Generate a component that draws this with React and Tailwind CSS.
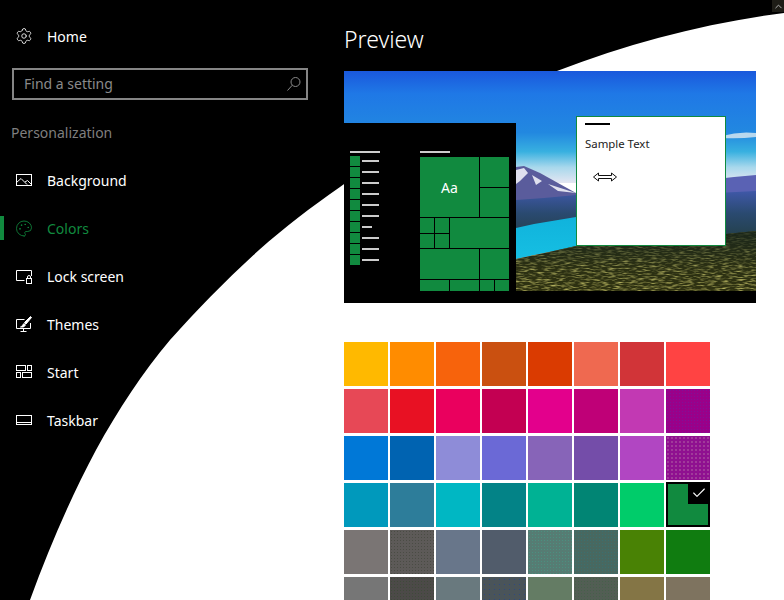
import React from 'react';
import { Settings, Palette, Check, ChevronUp } from 'lucide-react';

const SearchIcon = () => (
  <svg width="14" height="14" viewBox="0 0 14 14" fill="none" stroke="currentColor" strokeWidth="1">
    <circle cx="8.5" cy="5" r="4.5" />
    <path d="M5.3 8.2 L0.5 13.5" />
  </svg>
);

const ImageIcon = () => (
  <svg width="16" height="16" viewBox="0 0 16 16" fill="none" stroke="currentColor" strokeWidth="1">
    <rect x="0.5" y="2.5" width="15" height="11" />
    <path d="M0.5 10.5 L5 6.5 L11 12.5 M9 10 L11.5 8.5 L15.5 12.5" />
  </svg>
);

const LockIcon = () => (
  <svg width="16" height="16" viewBox="0 0 16 16" fill="none" stroke="currentColor" strokeWidth="1">
    <path d="M8.5 12.5 H0.5 V2.5 H15.5 V8" />
    <rect x="10.5" y="10.5" width="5" height="5" />
    <path d="M11.5 10.5 V9 A1.5 1.5 0 0 1 14.5 9 V10.5" />
  </svg>
);

const ThemesIcon = () => (
  <svg width="16" height="16" viewBox="0 0 16 16" fill="none" stroke="currentColor" strokeWidth="1">
    <path d="M8.5 3.5 H0.5 V12.5 H14.5 V7" />
    <path d="M4.5 15.5 H10.5 M7.5 12.5 V15.5" />
    <path d="M14.5 0.5 L15.5 1.5 L10 8 L8.5 6.5 Z" fill="currentColor" />
    <path d="M8 7.5 L9.5 9 L7.5 11 H4.5 C6 10.5 6.5 9 8 7.5 Z" fill="currentColor" />
  </svg>
);

const StartIcon = () => (
  <svg width="16" height="16" viewBox="0 0 16 16" fill="none" stroke="currentColor" strokeWidth="1">
    <rect x="0.5" y="1.5" width="9" height="5" />
    <rect x="11.5" y="1.5" width="4" height="5" />
    <rect x="0.5" y="8.5" width="4" height="5" />
    <rect x="6.5" y="8.5" width="9" height="5" />
  </svg>
);

const TaskbarIcon = () => (
  <svg width="16" height="16" viewBox="0 0 16 16" fill="none" stroke="currentColor" strokeWidth="1">
    <rect x="0.5" y="3.5" width="15" height="9" />
    <path d="M0.5 10.5 H15.5" />
  </svg>
);

const navItems = [
  { label: 'Background', icon: <ImageIcon /> },
  { label: 'Colors', icon: <Palette size={19} strokeWidth={1.1} />, active: true },
  { label: 'Lock screen', icon: <LockIcon /> },
  { label: 'Themes', icon: <ThemesIcon /> },
  { label: 'Start', icon: <StartIcon /> },
  { label: 'Taskbar', icon: <TaskbarIcon /> },
];

const swatches = [
  'bg-[#ffb900]', 'bg-[#ff8c00]', 'bg-[#f7630c]', 'bg-[#ca5010]', 'bg-[#da3b01]', 'bg-[#ef6950]', 'bg-[#d13438]', 'bg-[#ff4343]',
  'bg-[#e74856]', 'bg-[#e81123]', 'bg-[#ea005e]', 'bg-[#c30052]', 'bg-[#e3008c]', 'bg-[#bf0077]', 'bg-[#c239b3]', 'bg-[#9a0089] bg-[radial-gradient(#7f1398_0.7px,transparent_0.7px)] bg-[length:3px_3px]',
  'bg-[#0078d7]', 'bg-[#0063b1]', 'bg-[#8e8cd8]', 'bg-[#6b69d6]', 'bg-[#8764b8]', 'bg-[#744da9]', 'bg-[#b146c2]', 'bg-[#8f1090] bg-[radial-gradient(#a03a9a_0.8px,transparent_0.8px)] bg-[length:4px_4px]',
  'bg-[#0099bc]', 'bg-[#2d7d9a]', 'bg-[#00b7c3]', 'bg-[#038387]', 'bg-[#00b294]', 'bg-[#018574]', 'bg-[#00cc6a]', null,
  'bg-[#7a7574]', 'bg-[#5d5a58] bg-[radial-gradient(#4a4c44_0.8px,transparent_0.8px)] bg-[length:3px_3px]', 'bg-[#68768a]', 'bg-[#515c6b]', 'bg-[#567c73] bg-[radial-gradient(#4a9080_0.8px,transparent_0.8px)] bg-[length:3px_3px]', 'bg-[#486860] bg-[radial-gradient(#3a7070_0.8px,transparent_0.8px)] bg-[length:3px_3px]', 'bg-[#498205]', 'bg-[#107c10]',
  'bg-[#767676]', 'bg-[#4c4a48] bg-[radial-gradient(#3f4a3a_0.8px,transparent_0.8px)] bg-[length:3px_3px]', 'bg-[#69797e]', 'bg-[#4a5459] bg-[radial-gradient(#2f4a80_0.8px,transparent_0.8px)] bg-[length:5px_5px]', 'bg-[#647c64]', 'bg-[#525e54] bg-[radial-gradient(#46604a_0.8px,transparent_0.8px)] bg-[length:3px_3px]', 'bg-[#847545]', 'bg-[#7e735f]',
];

const tiles = [
  'col-span-4 row-span-4',
  'col-span-2 row-span-2',
  'col-span-2 row-span-2',
  '', '', 'col-span-4 row-span-2',
  '', '',
  'col-span-4 row-span-2',
  'col-span-2 row-span-2',
  'col-span-2', 'col-span-2', '', '',
];

const forest = 'M172 188 L205 181 L232 175 L300 168 L372 164 L412 160 V232 H172 Z';

// the lake photo behind the preview window
const Scenery = () => (
  <svg className="absolute inset-0" width="412" height="232" viewBox="0 0 412 232">
    <defs>
      <linearGradient id="sky" x1="0" y1="0" x2="0" y2="1">
        <stop offset="0" stopColor="#1a58dc" />
        <stop offset="0.2" stopColor="#1f78e6" />
        <stop offset="0.55" stopColor="#2288e0" />
        <stop offset="0.72" stopColor="#38b0e0" />
        <stop offset="0.86" stopColor="#a8d8ec" />
        <stop offset="1" stopColor="#e4e6f2" />
      </linearGradient>
      <linearGradient id="lake" x1="0" y1="0" x2="0" y2="1">
        <stop offset="0" stopColor="#10b2dc" />
        <stop offset="1" stopColor="#16bfe2" />
      </linearGradient>
      <linearGradient id="ridge" x1="0" y1="0" x2="0" y2="1">
        <stop offset="0" stopColor="#3f58a8" />
        <stop offset="0.5" stopColor="#2a4a70" />
        <stop offset="1" stopColor="#24404c" />
      </linearGradient>
      <linearGradient id="shade" x1="0" y1="0" x2="0" y2="1">
        <stop offset="0" stopColor="#16241c" stopOpacity="0.85" />
        <stop offset="0.5" stopColor="#16241c" stopOpacity="0.3" />
        <stop offset="1" stopColor="#16241c" stopOpacity="0.05" />
      </linearGradient>
      <filter id="trees" x="0" y="0" width="100%" height="100%">
        <feTurbulence type="fractalNoise" baseFrequency="0.14 0.7" numOctaves="2" seed="7" />
        <feColorMatrix values="0 0 0 0 0.62  0 0 0 0 0.58  0 0 0 0 0.14  2.6 0 0 0 -1.15" />
      </filter>
      <clipPath id="forestClip">
        <path d={forest} />
      </clipPath>
    </defs>
    <rect width="412" height="112" fill="url(#sky)" />
    <path d="M378 65 Q395 60 412 62 V66 Q395 68 378 67 Z" fill="#b8d8ee" />
    <path d="M172 96 L180 95 L196 102 L214 112 L232 122 V130 H172 Z" fill="#5a5c9c" />
    <path d="M172 99 L180 97 L184 102 L176 110 L172 113 Z M188 104 L198 110 L192 114 Z M204 113 L232 122 L214 120 Z" fill="#dfe0ee" />
    <path d="M372 108 L390 106 L412 104 V130 H372 Z" fill="#5a62b4" />
    <path d="M172 129 L200 127 L232 124 L300 125 L372 122 L412 120 V165 H172 Z" fill="url(#ridge)" />
    <path d="M172 157 L190 153 L232 146 L300 144 V178 L232 176 L205 181 L172 188 Z" fill="url(#lake)" />
    <path d={forest} fill="#33340f" />
    <g clipPath="url(#forestClip)">
      <rect x="172" y="160" width="240" height="72" filter="url(#trees)" />
    </g>
    <path d={forest} fill="url(#shade)" />
  </svg>
);

const StartMenu = () => (
  <div className="absolute left-0 top-[52px] bottom-0 w-[172px] bg-black pt-[28px] pl-[6px] flex">
    <div className="w-[70px] shrink-0">
      <div className="w-[30px] h-[2px] bg-[#cccccc] mb-[3px]" />
      <div className="flex flex-col gap-px">
        {Array.from({ length: 10 }).map((_, i) => (
          <div key={i} className="flex items-center h-[10px]">
            <div className="w-[10px] h-[10px] bg-[#118a3f]" />
            <div className={`h-[2px] bg-[#cccccc] ml-[2px] ${i === 6 ? 'w-[10px]' : 'w-[17px]'}`} />
          </div>
        ))}
      </div>
    </div>
    <div>
      <div className="w-[30px] h-[2px] bg-[#cccccc] mb-[4px]" />
      <div className="grid grid-cols-[repeat(6,14px)] grid-rows-[15px_14px_14px_14px_15px_14px_15px_14px_11px] gap-px">
        {tiles.map((t, i) => (
          <div key={i} className={`bg-[#118a3f] flex items-center justify-center text-white text-[14px] ${t}`}>
            {i === 0 ? 'Aa' : null}
          </div>
        ))}
      </div>
    </div>
  </div>
);

const SampleWindow = () => (
  <div className="absolute left-[232px] top-[45px] w-[150px] h-[130px] bg-white border border-[#118a3f] pl-[8px] pt-[6px]">
    <div className="w-[25px] h-[2px] bg-black" />
    <div className="mt-[11px] text-[11.4px] leading-[16px] text-[#222222]">Sample Text</div>
    <svg className="mt-[20px] ml-[8px]" width="25" height="10" viewBox="0 0 25 10" fill="#fff" stroke="#111" strokeWidth="1">
      <path d="M0.5 5 L5.5 1 V3.5 H18.5 V1 L23.5 5 L18.5 9 V6.5 H5.5 V9 Z" />
    </svg>
  </div>
);

const App = () => {
  return (
    <div className="relative w-[784px] h-[600px] overflow-hidden bg-white font-['Noto_Sans',sans-serif]">
      {/* black sweep behind the page */}
      <svg className="absolute inset-0" width="784" height="600" viewBox="0 0 784 600">
        <path d="M784 13 C706 23 630 43 557 71 C480 101 405 138 340 187 C310 208 285 227 259 250 C226 280 198 309 170 340 C143 372 118 410 96 450 C72 495 50 545 30 600 L0 600 L0 0 L784 0 Z" fill="#000" />
      </svg>

      <div className="relative flex">
        <div className="w-[344px] shrink-0">
          <div className="flex items-center h-[48px] mt-[12px] pl-[15px] text-white text-[14px]">
            <div className="w-[18px] flex justify-center">
              <Settings size={20} strokeWidth={1.1} />
            </div>
            <span className="ml-[14px]">Home</span>
          </div>
          <div className="flex items-center justify-between ml-[12px] mt-[8px] w-[296px] h-[32px] border-2 border-[#858585] pl-[10px] pr-[5px] text-[14px] leading-[18px] text-[#8a8a8a]">
            <span className="-mt-px">Find a setting</span>
            <SearchIcon />
          </div>
          <div className="ml-[11px] mt-[21px] h-[24px] leading-[24px] text-[14px] text-[#7f7f7f]">Personalization</div>
          <div className="mt-[11px]">
            {navItems.map((item) => (
              <div key={item.label} className={`relative flex items-center h-[48px] pl-[15px] text-[14px] ${item.active ? 'text-[#118a3f]' : 'text-white'}`}>
                {item.active && <div className="absolute left-0 top-[12px] w-[4px] h-[24px] bg-[#118a3f]" />}
                <div className="w-[18px] flex justify-center">{item.icon}</div>
                <span className="ml-[14px]">{item.label}</span>
              </div>
            ))}
          </div>
        </div>

        <div className="w-[440px]">
          <h1 className="pt-[23px] h-[71px] text-[23px] leading-[32px] font-light text-white">Preview</h1>
          <div className="relative w-[412px] h-[232px] overflow-hidden">
            <Scenery />
            <SampleWindow />
            <StartMenu />
            <div className="absolute left-0 right-0 bottom-0 h-[12px] bg-black" />
          </div>
          <div className="mt-[39px] grid grid-cols-[repeat(8,44px)] auto-rows-[44px] gap-x-[2px] gap-y-[3px]">
            {swatches.map((c, i) =>
              c ? (
                <div key={i} className={c} />
              ) : (
                <div key={i} className="relative -mt-px h-[45px] bg-black p-[2px]">
                  <div className="h-full bg-[#118a3f]" />
                  <div className="absolute top-0 right-0 w-[22px] h-[22px] bg-black flex items-center justify-center text-white">
                    <Check size={16} strokeWidth={1.6} />
                  </div>
                </div>
              )
            )}
          </div>
        </div>
      </div>

      <div className="absolute top-0 right-0 w-[12px] h-[12px] bg-[#1e1d17] text-[#bbbbbb] flex items-center justify-center">
        <ChevronUp size={11} strokeWidth={2} />
      </div>
    </div>
  );
};

export default App;
